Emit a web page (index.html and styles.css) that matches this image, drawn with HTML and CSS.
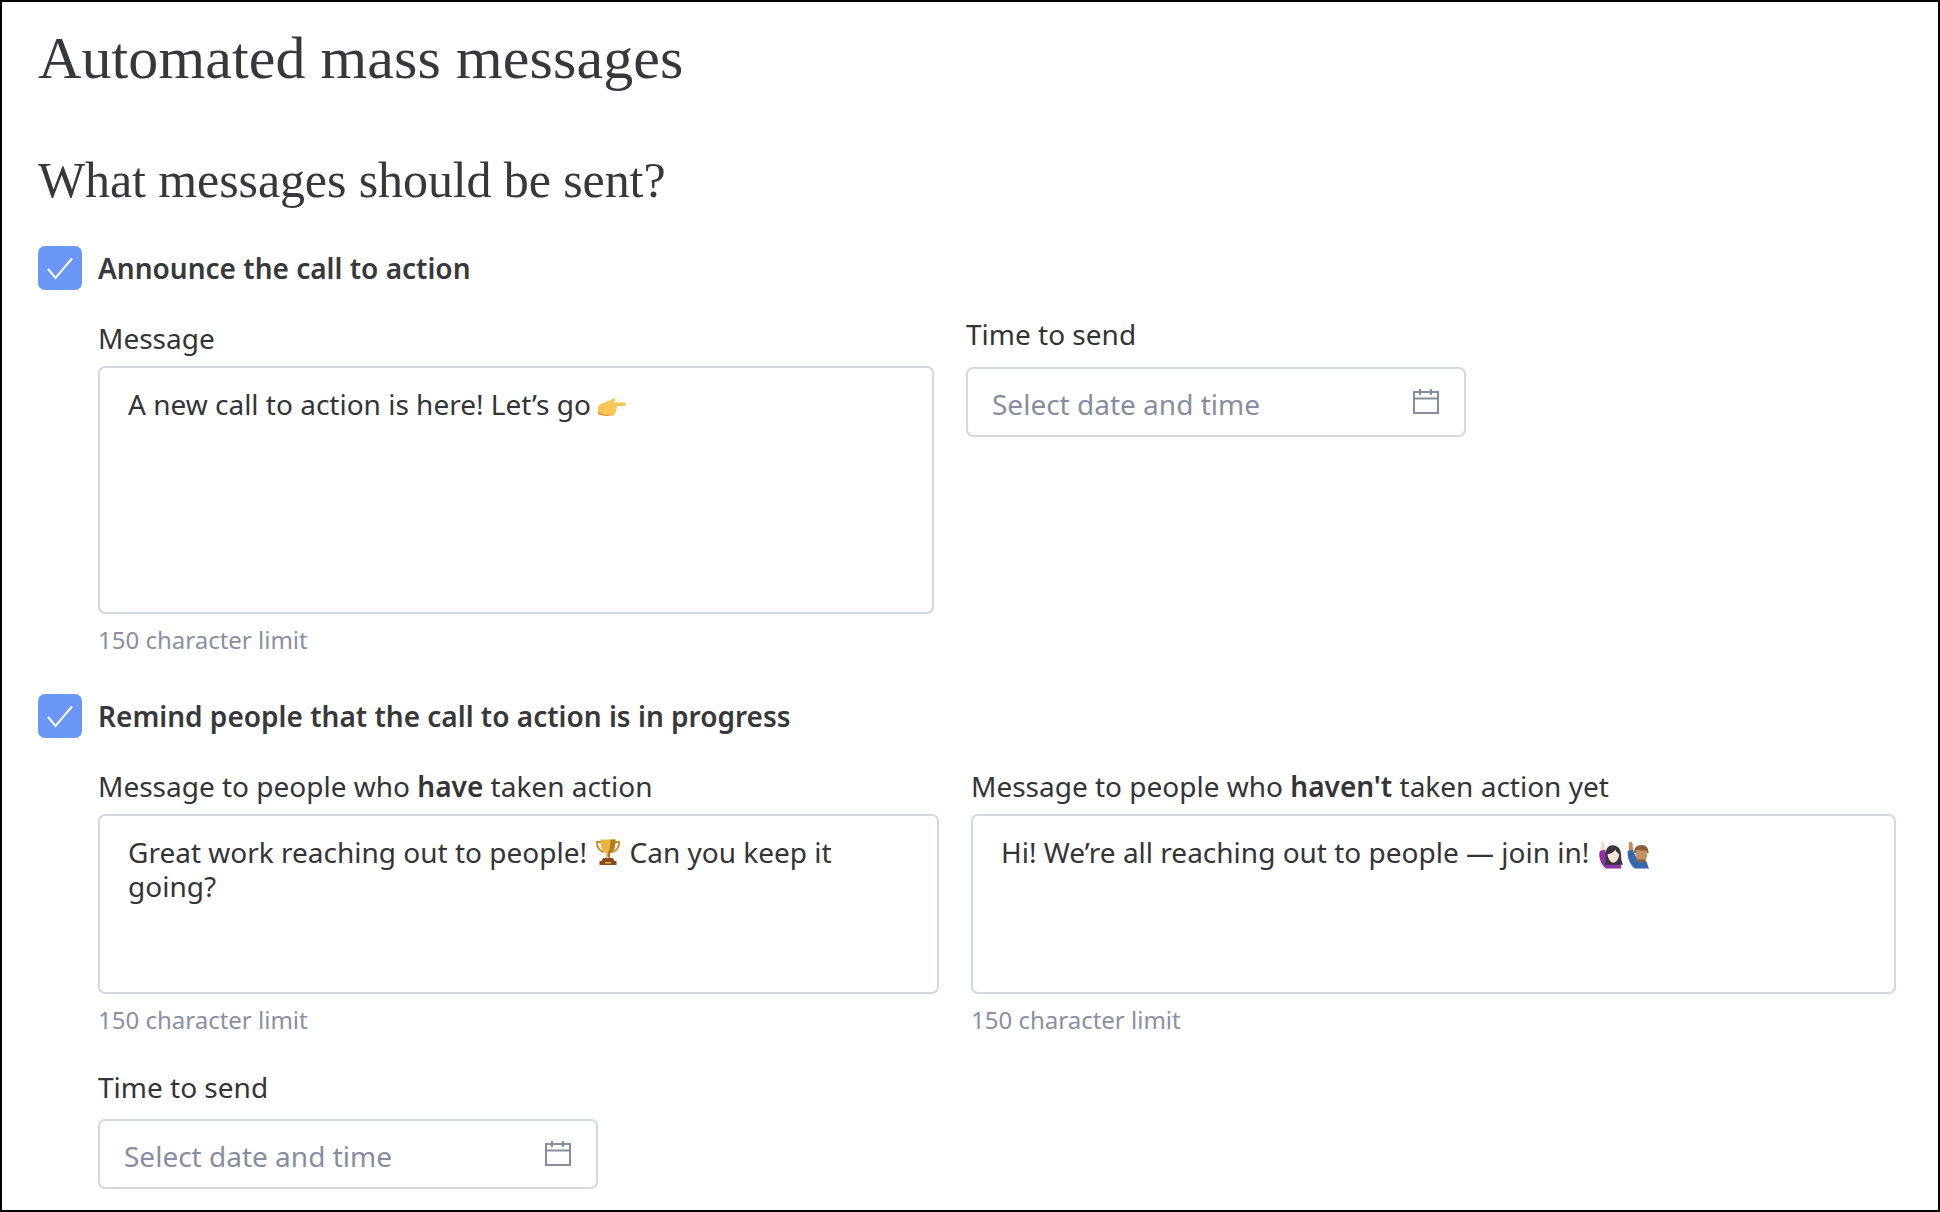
FILE: index.html
```html
<!DOCTYPE html>
<html lang="en">
<head>
<meta charset="utf-8">
<title>Automated mass messages</title>
<link rel="stylesheet" href="styles.css">
</head>
<body>
<main class="page">
  <h1 class="title">Automated mass messages</h1>
  <h2 class="subtitle">What messages should be sent?</h2>

  <section class="group group-first">
    <div class="check-row">
      <span class="checkbox"><svg class="tick" viewBox="0 0 44 44"><path d="M10 23 L17.500 32 L34 12.500"/></svg></span>
      <span class="check-label">Announce the call to action</span>
    </div>
    <div class="fields fields-announce">
      <div class="field field-message">
        <div class="label label-message">Message</div>
        <div class="box box-tall">A new call to action is here! Let’s go <svg class="emoji emoji-hand" viewBox="0 0 28 19"><path fill="#f6c755" d="M0 8c2-1.500 4.500-3 6.500-3.500C9.500 3.500 13 1.500 15.500.500c1.500-.5 2.300.5 1.800 1.700-.3.9-1 1.600-2 2.300H26.500c1.800 0 1.800 3.500 0 3.500H18.500c.7 1.200.5 2.500-.3 3.200.5 1.200 0 2.400-.9 3 .2 1.200-.6 2.300-1.800 2.500-3 .5-6 .8-8.500.5C4 17.800 2 16.500 0 16z"/><path fill="#e39a2d" d="M0 14c2 .8 4 2 7 2.500 3 .4 6 .3 9-.3-.3.6-.8 1-1.500 1.100-3 .5-6 .8-8.500.5C4 17.800 2 16.500 0 16z"/></svg></div>
        <div class="hint">150 character limit</div>
      </div>
      <div class="field field-date">
        <div class="label">Time to send</div>
        <div class="date">
          <span class="placeholder">Select date and time</span>
          <svg class="cal" viewBox="0 0 26 25"><path d="M1 3h24v21H1zM1 9.500h24M7 0v6M18 0v6"/></svg>
        </div>
      </div>
    </div>
  </section>

  <section class="group">
    <div class="check-row">
      <span class="checkbox"><svg class="tick" viewBox="0 0 44 44"><path d="M10 23 L17.500 32 L34 12.500"/></svg></span>
      <span class="check-label">Remind people that the call to action is in progress</span>
    </div>
    <div class="fields fields-remind">
      <div class="field field-have">
        <div class="label label-message">Message to people who <b>have</b> taken action</div>
        <div class="box box-mid">Great work reaching out to people! <svg class="emoji emoji-trophy" viewBox="0 0 26 28"><path fill="none" stroke="#c9922e" stroke-width="2" d="M6 4H2c-.5 5 2.500 9 7 10M20 4h4c.5 5-2.500 9-7 10"/><path fill="#e8b545" d="M5.500 1.500h15c.3 7-1.500 12-5.500 14v4h-4v-4c-4-2-5.800-7-5.500-14z"/><path fill="#b47a20" d="M15.500 1.500h5c.3 7-1.500 12-5.500 14v4h-2v-5c2-3 2.500-8 2.500-13z"/><path fill="#8a4b22" d="M8 20h10l1.500 3h2v4h-17v-4h2z"/><path fill="#e3b64a" d="M10 24h6v1.500h-6z"/></svg> Can you keep it<br>going?</div>
        <div class="hint">150 character limit</div>
      </div>
      <div class="field field-havent">
        <div class="label label-message">Message to people who <b>haven't</b> taken action yet</div>
        <div class="box box-mid">Hi! We’re all reaching out to people — join in! <svg class="emoji emoji-people" viewBox="0 0 54 28"><path fill="#f7dcc8" d="M4 1c1.500-1.500 4-.5 4 1.500l.5 7-4.500.5z"/><path fill="#8f33a6" d="M3 9.500 8.500 8.500c.7 3.500 2 6 3.500 7.500l12 5 1.500 7H9C4 23 1 16 3 9.500z"/><path fill="#37343a" d="M16 4c6 0 9 4.500 9 10 0 4 .5 7 2 10H8c1.500-3 1-6 1-10 0-5.500 2-10 7-10z"/><path fill="#f9e4d8" d="M11 13c3 0 6.500-2 8-4.500 1 2 3 3.800 4 4.500 0 5-3.500 9-6 9s-6-4-6-9z"/><path fill="#c08d62" d="M33 1c1.500-1.500 4-.5 4 1.500l.5 7-4.500.5z"/><path fill="#3467b0" d="M32 9.500 37.500 8.500c.7 3.500 2 6 3.500 7.500l10 4 3 8H39c-5-5-8-12-7-18.500z"/><path fill="#c29268" d="M40 10c0-3.500 2.500-5 6-5s6 1.500 6 5v4c0 4-3 8-6 8s-6-4-6-8z"/><path fill="#8a5f3a" d="M38.500 12c-.5-5 2.500-8.500 7.500-8.500s8 3.500 7.500 8.500H52l-.7-3c-3 .5-7.500.5-10.500-.5L40 12zM41.500 18c1.500 1 7.500 1 9 0-.5 2-2.500 4.200-4.500 4.200s-4-2.200-4.500-4.200z"/></svg></div>
        <div class="hint">150 character limit</div>
      </div>
    </div>
    <div class="field field-date-bottom">
      <div class="label">Time to send</div>
      <div class="date">
        <span class="placeholder">Select date and time</span>
        <svg class="cal" viewBox="0 0 26 25"><path d="M1 3h24v21H1zM1 9.500h24M7 0v6M18 0v6"/></svg>
      </div>
    </div>
  </section>
</main>
</body>
</html>
```
FILE: styles.css
```css
* { box-sizing: border-box; }
html, body { margin: 0; padding: 0; background: #fff; }
body { font-family: "Noto Sans", sans-serif; color: #333438; }
.page {
  width: 1940px;
  height: 1212px;
  border: 2px solid #000;
  padding: 0 36px;
  overflow: hidden;
}
.title, .subtitle {
  font-family: "Liberation Serif", serif;
  font-weight: 400;
  color: #37383b;
  margin: 0;
}
.title { font-size: 60px; line-height: 76px; margin-top: 18px; letter-spacing: .1px; }
.subtitle { font-size: 50px; line-height: 64px; margin-top: 52px; letter-spacing: -.1px; }
.group-first { margin-top: 34px; }
.group { display: flex; flex-direction: column; }
.group + .group { margin-top: 38px; }
.check-row { display: flex; align-items: center; gap: 16px; height: 44px; }
.checkbox {
  width: 44px; height: 44px; border-radius: 7px; background: #6b97f6;
  display: block; flex: none;
}
.tick { display: block; width: 44px; height: 44px; fill: none; stroke: #fff; stroke-width: 2; }
.check-label { font-size: 28px; font-weight: 600; color: #37383b; margin-top: -1px; }
.fields { display: flex; margin-left: 60px; }
.fields-announce { gap: 32px; margin-top: 30px; }
.fields-remind { gap: 32px; margin-top: 30px; }
.field { display: flex; flex-direction: column; }
.field-message { width: 836px; }
.field-have { width: 841px; }
.field-havent { width: 925px; }
.label { font-size: 28px; line-height: 36px; }
.label-message { margin-bottom: 10px; }
.label b { font-weight: 600; }
.box {
  border: 2px solid #d3d7df;
  border-radius: 7px;
  padding: 20px 28px;
  font-size: 28px;
  line-height: 33.500px;
}
.box-tall { height: 248px; }
.box-mid { height: 180px; }
.hint { font-size: 24px; line-height: 32px; color: #8a8fa3; margin-top: 10px; }
.field-date { margin-top: -4px; width: 500px; }
.field-date .label { margin-bottom: 15px; }
.date {
  width: 500px; height: 70px;
  border: 2px solid #d3d7df;
  border-radius: 7px;
  padding: 4px 25px 0 24px;
  display: flex; align-items: center; justify-content: space-between;
}
.placeholder { font-size: 28px; color: #878da0; }
.cal { width: 26px; height: 25px; margin-top: -6px; fill: none; stroke: #878da0; stroke-width: 2; }
.field-date-bottom { margin: 33px 0 0 60px; }
.field-date-bottom .label { margin-bottom: 14px; }
.emoji { display: inline-block; vertical-align: -4px; }
.emoji-hand { width: 28px; height: 19px; vertical-align: -2px; }
.emoji-trophy { width: 28px; height: 28px; vertical-align: -3px; }
.emoji-people { width: 52px; height: 28px; vertical-align: -6px; }
```
